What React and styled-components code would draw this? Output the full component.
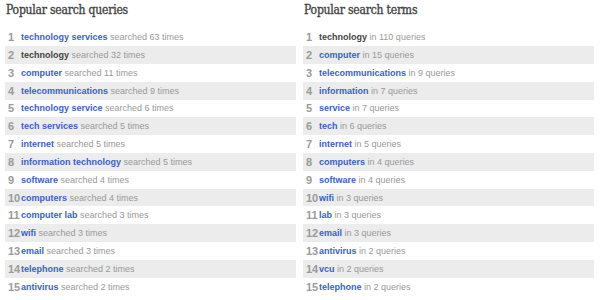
import React from "react";
import styled, { createGlobalStyle } from "styled-components";

const Global = createGlobalStyle`
  html, body { margin: 0; padding: 0; background: #fff; }
  body { width: 600px; height: 300px; overflow: hidden; font-family: "Liberation Sans", Arial, sans-serif; }
`;

const Page = styled.div`
  display: grid;
  grid-template-columns: 291px 291px;
  column-gap: 7px;
  padding: 0 6px 0 5px;
`;

const Column = styled.section`
  display: flex;
  flex-direction: column;
`;

const Heading = styled.h2`
  margin: 0;
  padding: 3px 0 0 1px;
  height: 28.2px;
  box-sizing: border-box;
  font-family: "DejaVu Serif Condensed", "DejaVu Serif", "Liberation Serif", serif;
  font-stretch: condensed;
  font-size: 12px;
  line-height: 14px;
  font-weight: normal;
  -webkit-text-stroke: 0.35px #444;
  color: #444;
  letter-spacing: -0.2px;
`;

const List = styled.ol`
  list-style: none;
  margin: 0;
  padding: 0;
`;

const Row = styled.li`
  display: flex;
  align-items: center;
  height: 17.83px;
  padding-left: ${(p) => p.$indent}px;
  background: ${(p) => (p.$shaded ? "#ececec" : "transparent")};
  white-space: nowrap;
`;

const Num = styled.span`
  min-width: 13px;
  font-size: 11px;
  font-weight: bold;
  color: #9a9a9a;
`;

const Term = styled.span`
  font-size: 9px;
  font-weight: bold;
  color: ${(p) => (p.$plain ? "#444" : "#3a5fcd")};
  margin-right: 2.5px;
`;

const Meta = styled.span`
  font-size: 9px;
  color: #999;
`;

const queries = [
  ["technology services", "searched 63 times"],
  ["technology", "searched 32 times", true],
  ["computer", "searched 11 times"],
  ["telecommunications", "searched 9 times"],
  ["technology service", "searched 6 times"],
  ["tech services", "searched 5 times"],
  ["internet", "searched 5 times"],
  ["information technology", "searched 5 times"],
  ["software", "searched 4 times"],
  ["computers", "searched 4 times"],
  ["computer lab", "searched 3 times"],
  ["wifi", "searched 3 times"],
  ["email", "searched 3 times"],
  ["telephone", "searched 2 times"],
  ["antivirus", "searched 2 times"],
];

const terms = [
  ["technology", "in 110 queries", true],
  ["computer", "in 15 queries"],
  ["telecommunications", "in 9 queries"],
  ["information", "in 7 queries"],
  ["service", "in 7 queries"],
  ["tech", "in 6 queries"],
  ["internet", "in 5 queries"],
  ["computers", "in 4 queries"],
  ["software", "in 4 queries"],
  ["wifi", "in 3 queries"],
  ["lab", "in 3 queries"],
  ["email", "in 3 queries"],
  ["antivirus", "in 2 queries"],
  ["vcu", "in 2 queries"],
  ["telephone", "in 2 queries"],
];

function Panel({ title, items, indent }) {
  return (
    <Column>
      <Heading>{title}</Heading>
      <List>
        {items.map(([term, meta, plain], i) => (
          <Row key={i} $shaded={i % 2 === 1} $indent={indent}>
            <Num>{i + 1}</Num>
            <Term $plain={plain}>{term}</Term>
            <Meta>{meta}</Meta>
          </Row>
        ))}
      </List>
    </Column>
  );
}

export default function App() {
  return (
    <>
      <Global />
      <Page>
        <Panel title="Popular search queries" items={queries} indent={3} />
        <Panel title="Popular search terms" items={terms} indent={3} />
      </Page>
    </>
  );
}
